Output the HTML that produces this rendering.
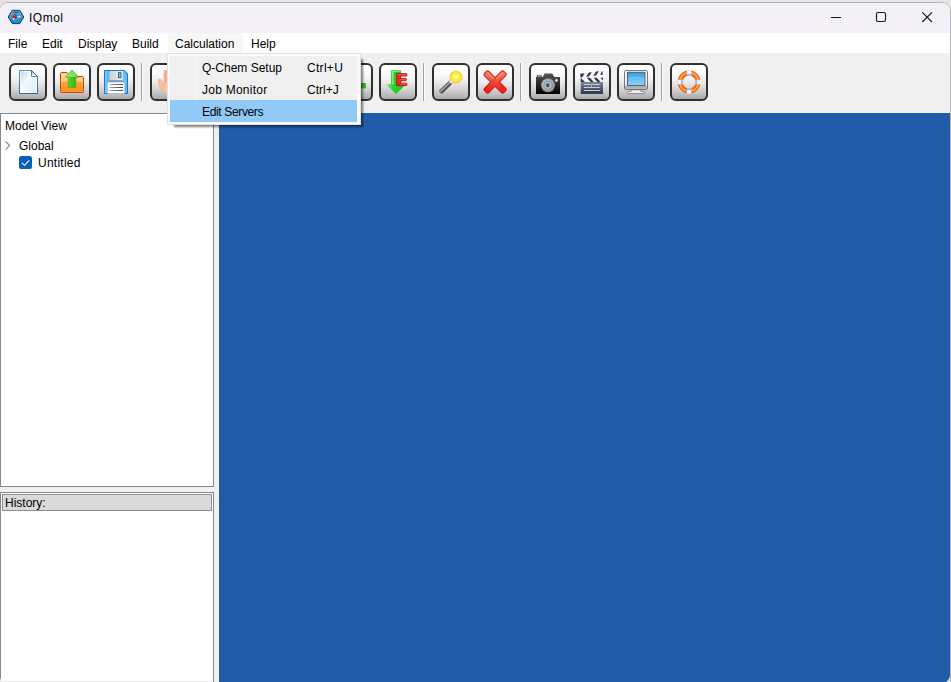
<!DOCTYPE html>
<html>
<head>
<meta charset="utf-8">
<title>IQmol</title>
<style>
html,body{margin:0;padding:0;}
body{width:951px;height:682px;overflow:hidden;background:#e5e5e5;font-family:"Liberation Sans",sans-serif;font-size:12px;color:#000;position:relative;}
#frame{position:absolute;left:-1px;top:2px;width:950px;height:690px;border:1px solid #b5b5b5;border-radius:9px;}
#win{position:absolute;left:0;top:0;width:950px;height:683px;clip-path:inset(3px 0 0 0 round 8px 8px 8px 6px);background:#f0f0f0;}
#win div,#win span{position:absolute;box-sizing:border-box;}
#title{left:0;top:3px;width:950px;height:30px;background:#f3f0f7;}
.t{line-height:14px;white-space:nowrap;}
#menubar{left:0;top:33px;width:950px;height:20px;background:#fff;}
#calcbg{left:168px;top:33px;width:75px;height:19px;background:#f7f7f7;border-radius:3px;}
.btn{top:63px;width:38px;height:38px;border:2px solid #303030;border-radius:6px;background:linear-gradient(#ffffff 0%,#fbfbfb 25%,#ececec 50%,#cfcfcf 75%,#a9a9a9 100%);overflow:hidden;}
.sep{top:63px;width:2px;height:38px;background:#fcfcfc;border-left:1px solid #a3a3a3;}
#viewer{left:219px;top:113px;width:731px;height:580px;background:#205ca8;}
#model{left:0;top:113px;width:214px;height:374px;background:#fff;border:1px solid #828790;}
#hist{left:0;top:492px;width:214px;height:200px;background:#fff;border:1px solid #828790;}
#histhead{left:2px;top:494px;width:210px;height:17px;background:#dadada;border:1px solid #8e8e8e;}
#dd{left:167px;top:53px;width:194px;height:72px;background:#fafafa;border:1px solid #e2e2e2;}
#ddsh{left:174px;top:59px;width:189px;height:68px;background:rgba(0,0,0,0.5);filter:blur(1.3px);}
#ddin{left:170px;top:56px;width:187px;height:66px;background:#f0f0f0;}
#ddsep{left:195px;top:56px;width:3px;height:66px;background:#f4f4f4;}
#hl{left:170px;top:100px;width:187px;height:22px;background:#91c9f7;}
</style>
</head>
<body>
<div id="frame"></div>
<div id="win">
  <div id="title"></div>
  <span class="t" style="left:29px;top:11px;letter-spacing:0.5px">IQmol</span>
  <div id="menubar"></div>
  <div id="calcbg"></div>
  <span class="t" style="left:8px;top:37px">File</span>
  <span class="t" style="left:42px;top:37px">Edit</span>
  <span class="t" style="left:78px;top:37px">Display</span>
  <span class="t" style="left:132px;top:37px">Build</span>
  <span class="t" style="left:175px;top:37px">Calculation</span>
  <span class="t" style="left:251px;top:37px">Help</span>

  <div class="btn" id="b1" style="left:9px"></div>
  <div class="btn" id="b2" style="left:53px"></div>
  <div class="btn" id="b3" style="left:97px"></div>
  <div class="sep" style="left:141px"></div>
  <div class="btn" id="b4" style="left:150px"></div>
  <div class="btn" id="b8" style="left:335px"></div>
  <div class="btn" id="b9" style="left:379px"></div>
  <div class="sep" style="left:423px"></div>
  <div class="btn" id="b10" style="left:432px"></div>
  <div class="btn" id="b11" style="left:476px"></div>
  <div class="sep" style="left:520px"></div>
  <div class="btn" id="b12" style="left:529px"></div>
  <div class="btn" id="b13" style="left:573px"></div>
  <div class="btn" id="b14" style="left:617px"></div>
  <div class="sep" style="left:661px"></div>
  <div class="btn" id="b15" style="left:670px"></div>

  <div id="viewer"></div>
  <div id="model"></div>
  <span class="t" style="left:5px;top:119px">Model View</span>
  <span class="t" style="left:19px;top:139px">Global</span>
  <span class="t" style="left:38px;top:156px;letter-spacing:0.25px">Untitled</span>
  <div id="hist"></div>
  <div id="histhead"></div>
  <div style="left:1px;top:681px;width:211px;height:1px;background:#ececec"></div>
  <span class="t" style="left:5px;top:496px">History:</span>

  <svg id="icons" style="position:absolute;left:0;top:0" width="950" height="683" viewBox="0 0 950 683">
    <defs>
      <linearGradient id="gDoc" x1="0" y1="0" x2="1" y2="1"><stop offset="0" stop-color="#b4d0e2"/><stop offset="0.4" stop-color="#f4f9fb"/><stop offset="1" stop-color="#dfeaf2"/></linearGradient>
      <linearGradient id="gDocS" x1="0" y1="0" x2="0" y2="1"><stop offset="0" stop-color="#4a86b2"/><stop offset="1" stop-color="#145a8e"/></linearGradient>
      <linearGradient id="gFoldT" x1="0" y1="0" x2="1" y2="1"><stop offset="0" stop-color="#7aa2be"/><stop offset="0.6" stop-color="#ffffff"/><stop offset="1" stop-color="#ffffff"/></linearGradient>
      <linearGradient id="gFold" x1="0" y1="0" x2="0" y2="1"><stop offset="0" stop-color="#ffd28c"/><stop offset="0.45" stop-color="#ffb860"/><stop offset="0.5" stop-color="#ffa238"/><stop offset="1" stop-color="#ff9424"/></linearGradient>
      <linearGradient id="gGreen" x1="0" y1="0" x2="1" y2="0"><stop offset="0" stop-color="#7ee05a"/><stop offset="0.4" stop-color="#4ccc20"/><stop offset="1" stop-color="#2fa010"/></linearGradient>
      <linearGradient id="gFlop" x1="0" y1="0" x2="1" y2="0"><stop offset="0" stop-color="#86d0fa"/><stop offset="0.12" stop-color="#5cbaf4"/><stop offset="0.8" stop-color="#6ec4f6"/><stop offset="1" stop-color="#5ab4f0"/></linearGradient>
      <linearGradient id="gLine" gradientUnits="userSpaceOnUse" x1="109" y1="0" x2="123" y2="0"><stop offset="0" stop-color="#a8a0b0"/><stop offset="1" stop-color="#2c2434"/></linearGradient>
      <linearGradient id="gShut" x1="0" y1="0" x2="1" y2="0"><stop offset="0" stop-color="#d0d0d0"/><stop offset="1" stop-color="#f0f0f0"/></linearGradient>
      <linearGradient id="gArr" x1="0" y1="0" x2="1" y2="0"><stop offset="0" stop-color="#8fe88f"/><stop offset="0.35" stop-color="#2fcf2f"/><stop offset="1" stop-color="#18b818"/></linearGradient>
      <linearGradient id="gX2" x1="0" y1="0" x2="1" y2="0"><stop offset="0" stop-color="#f47a5c"/><stop offset="0.5" stop-color="#ee4a34"/><stop offset="1" stop-color="#e61c1c"/></linearGradient>
      <linearGradient id="gX3" x1="1" y1="0" x2="0" y2="0"><stop offset="0" stop-color="#f47a5c"/><stop offset="0.5" stop-color="#ee4a34"/><stop offset="1" stop-color="#e61c1c"/></linearGradient>
      <linearGradient id="gX" x1="0" y1="0" x2="0" y2="1"><stop offset="0" stop-color="#f47a5c"/><stop offset="0.5" stop-color="#ee4a34"/><stop offset="1" stop-color="#e61c1c"/></linearGradient>
      <linearGradient id="gCam" x1="0" y1="0" x2="0" y2="1"><stop offset="0" stop-color="#555"/><stop offset="0.5" stop-color="#2a2a2a"/><stop offset="1" stop-color="#000"/></linearGradient>
      <radialGradient id="gLens"><stop offset="0" stop-color="#3a6c98"/><stop offset="0.35" stop-color="#3a6c98"/><stop offset="0.5" stop-color="#c8ccd0"/><stop offset="0.75" stop-color="#a2a2a2"/><stop offset="1" stop-color="#8a8a8a"/></radialGradient>
      <linearGradient id="gRing" x1="0" y1="0" x2="1" y2="1"><stop offset="0" stop-color="#c4c4c4"/><stop offset="0.5" stop-color="#a8a8a8"/><stop offset="1" stop-color="#8c8c8c"/></linearGradient>
      <linearGradient id="gClap" x1="0" y1="0" x2="0" y2="1"><stop offset="0" stop-color="#7e8a9c"/><stop offset="1" stop-color="#263446"/></linearGradient>
      <linearGradient id="gScr" x1="0" y1="0" x2="0" y2="1"><stop offset="0" stop-color="#379ee0"/><stop offset="0.45" stop-color="#5cb6ea"/><stop offset="0.5" stop-color="#6cc2f0"/><stop offset="1" stop-color="#86d2f6"/></linearGradient>
      <linearGradient id="gMon" x1="0" y1="0" x2="0" y2="1"><stop offset="0" stop-color="#fcfcfc"/><stop offset="0.78" stop-color="#ececec"/><stop offset="0.82" stop-color="#aaaeae"/><stop offset="1" stop-color="#b8baba"/></linearGradient>
      <radialGradient id="gStar"><stop offset="0" stop-color="#ffffff"/><stop offset="0.3" stop-color="#fffa80"/><stop offset="0.75" stop-color="#fff220"/><stop offset="1" stop-color="#ffd820"/></radialGradient>
      <linearGradient id="gWand" x1="0" y1="0" x2="0" y2="1"><stop offset="0" stop-color="#585858"/><stop offset="0.32" stop-color="#b8b8b8"/><stop offset="0.55" stop-color="#7a7a7a"/><stop offset="1" stop-color="#2c2c2c"/></linearGradient>
      <linearGradient id="gHex" x1="0" y1="0" x2="0" y2="1"><stop offset="0" stop-color="#5fb4e4"/><stop offset="0.5" stop-color="#2f9fdc"/><stop offset="1" stop-color="#1c8cd0"/></linearGradient>
      <radialGradient id="gRed" cx="0.4" cy="0.4"><stop offset="0" stop-color="#ff7060"/><stop offset="0.5" stop-color="#f01010"/><stop offset="1" stop-color="#d00000"/></radialGradient>
    </defs>

    <!-- title icon -->
    <g>
      <path d="M12.2 10.3 H19.8 L23.8 17 L19.8 23.6 H12.2 L8.2 17 Z" fill="url(#gHex)" stroke="#163a54" stroke-width="1" stroke-linejoin="round"/>
      <path d="M13.4 12.3 H18.7" stroke="#1c4c6c" stroke-width="1"/>
      <path d="M11.6 17.5 L12.8 22 M20.4 17.5 L19.2 22" stroke="#1a4866" stroke-width="0.7" stroke-dasharray="1 0.8" opacity="0.7"/>
      <path d="M14.8 16.3 L13.6 19 M14.8 16.3 L19.4 16.8" stroke="#e8e4d8" stroke-width="0.9"/>
      <circle cx="19.5" cy="16.8" r="0.9" fill="#f4f0e4"/>
      <circle cx="13.5" cy="19.1" r="0.8" fill="#f4f0e4"/>
      <circle cx="14.8" cy="16.3" r="2" fill="url(#gRed)"/>
    </g>
    <!-- window controls -->
    <path d="M831 17.5 H841" stroke="#1a1a1a" stroke-width="1.1"/>
    <rect x="876.5" y="12.5" width="9" height="9" rx="1.4" fill="none" stroke="#1a1a1a" stroke-width="1.15"/>
    <path d="M922.3 12.3 L932 22 M932 12.3 L922.3 22" stroke="#1a1a1a" stroke-width="1.15"/>

    <!-- b1 new doc -->
    <g>
      <path d="M19.5 70.5 H31.5 L37.5 76.5 V93.5 H19.5 Z" fill="url(#gDoc)" stroke="url(#gDocS)" stroke-width="0.9" stroke-linejoin="miter"/>
      <path d="M20.5 71.6 H30.6 V77.3 H36.5 V92.5 H20.5 Z" fill="none" stroke="#ffffff" stroke-width="1" opacity="0.8"/>
      <path d="M31.4 70.8 V76.6 H37.2 Z" fill="url(#gFoldT)"/>
      <path d="M31.5 70.5 V76.5 H37.5" fill="none" stroke="#2f6e9e" stroke-width="0.8"/>
      <path d="M31.5 70.5 L37.5 76.5" stroke="#1f5f90" stroke-width="1"/>
    </g>
    <!-- b2 open -->
    <g>
      <path d="M61.5 72.5 H67 L68.5 74.5 V76.5 H82.5 Q83.5 76.5 83.5 77.5 V91.5 Q83.5 92.5 82.5 92.5 H61.5 Q60.5 92.5 60.5 91.5 V73.5 Q60.5 72.5 61.5 72.5 Z" fill="url(#gFold)" stroke="#c44a04" stroke-width="1"/>
      <path d="M61.5 82 Q72 79.5 82.5 82 V77.5 H68 V73.5 H61.5 Z" fill="#ffe0a8" opacity="0.45"/>
      <path d="M72 70 L78.8 77.2 H75.8 V87.7 H68.2 V77.2 H65.2 Z" fill="url(#gGreen)" stroke="#3aa81c" stroke-width="0.6"/>
      <path d="M72 70.6 L77.6 76.8 H66.4 Z" fill="#a6ec84" opacity="0.7"/>
    </g>
    <!-- b3 save -->
    <g>
      <path d="M104.5 70.5 H124.5 L127.5 73.5 V93.5 H104.5 Z" fill="url(#gFlop)" stroke="#1878d0" stroke-width="1"/>
      <rect x="109.5" y="71" width="13.2" height="9.5" fill="url(#gShut)"/>
      <path d="M109.5 80.7 H122.7" stroke="#6a8db4" stroke-width="0.8"/>
      <rect x="118.4" y="72.7" width="2.6" height="5" fill="#5fc8ff" stroke="#3a4660" stroke-width="0.8"/>
      <rect x="107.5" y="81.8" width="17" height="11.7" fill="#ffffff" stroke="#c8b8b0" stroke-width="0.5"/>
      <path d="M109.5 84.5 H123 M109.5 87.5 H123 M109.5 90.5 H123" stroke="url(#gLine)" stroke-width="0.9"/>
      <path d="M107.5 81.8 H124.5" stroke="#5c7ea8" stroke-width="0.8"/>
    </g>
    <!-- b4 hand (mostly hidden) -->
    <g>
      <path d="M164 72 Q164 70.2 165.6 70.2 Q167.3 70.2 167.3 72 V82 L171 82 V93 Q166 94.5 162 91 Q159.5 87 158.2 80.8 Q158 79 159.6 78.9 Q161 78.9 161.6 80.6 L163 84.5 Q164 85.5 164 84 Z" fill="#f6c498" stroke="#f0a080" stroke-width="0.6"/>
      <path d="M165.6 70.6 V83" stroke="#f4a890" stroke-width="2.2"/>
    </g>
    <!-- b8 partially hidden -->
    <rect x="356" y="83" width="10" height="5.5" fill="#3cb81c"/>
    <!-- b9 arrow down + E -->
    <g>
      <path d="M391 70.2 H401 V84.2 H406 L396 94 L386 84.2 H391 Z" fill="url(#gArr)"/>
      <path d="M392 71 H400.5 V72 H393.5 V84.5 H392 Z" fill="#b4f0b4" opacity="0.7"/>
      <path d="M396.6 73.5 H406.8 V76 H400.8 V78.5 H406.2 V80.6 H400.8 V83.2 H406.8 V85.5 H396.6 Z" fill="#ee2424" stroke="#b01818" stroke-width="0.8" stroke-linejoin="miter"/>
      <path d="M397.6 74.6 H406 M400.6 79.4 H405.6 M400.6 84.2 H406" stroke="#ff8a80" stroke-width="0.7" opacity="0.8"/>
    </g>
    <!-- b10 wand -->
    <g>
      <g transform="translate(441.3 91.4) rotate(-44)">
        <rect x="-1.6" y="-1.9" width="17" height="3.8" rx="1.8" fill="url(#gWand)" stroke="#444" stroke-width="0.6"/>
        <rect x="12.6" y="-1.9" width="5.2" height="3.8" fill="#f6f6fa" stroke="#a8a8b0" stroke-width="0.4"/>
      </g>
      <polygon points="463.2,77.0 461.1,78.0 462.7,79.8 460.3,79.9 461.1,82.1 458.9,81.3 458.8,83.7 457.0,82.1 456.0,84.2 455.0,82.1 453.2,83.7 453.1,81.3 450.9,82.1 451.7,79.9 449.3,79.8 450.9,78.0 448.8,77.0 450.9,76.0 449.3,74.2 451.7,74.1 450.9,71.9 453.1,72.7 453.2,70.3 455.0,71.9 456.0,69.8 457.0,71.9 458.8,70.3 458.9,72.7 461.1,71.9 460.3,74.1 462.7,74.2 461.1,76.0" fill="#ffb430"/>
      <circle cx="456" cy="77" r="5.3" fill="url(#gStar)"/>
    </g>
    <!-- b11 X -->
    <g transform="translate(495.1 82)">
      <g transform="rotate(45)"><rect x="-14.2" y="-3.6" width="28.4" height="7.2" rx="2.2" fill="#e00c14"/></g>
      <g transform="rotate(-45)"><rect x="-14.2" y="-3.6" width="28.4" height="7.2" rx="2.2" fill="#e00c14"/></g>
      <g transform="rotate(45)"><rect x="-13.3" y="-2.7" width="26.6" height="5.4" rx="1.5" fill="url(#gX2)"/></g>
      <g transform="rotate(-45)"><rect x="-13.3" y="-2.7" width="26.6" height="5.4" rx="1.5" fill="url(#gX3)"/></g>
      <g transform="rotate(45)"><rect x="-12" y="-2" width="9" height="1.5" rx="0.7" fill="#fbb0a0" opacity="0.55"/></g>
      <g transform="rotate(-45)"><rect x="3" y="-2" width="9" height="1.5" rx="0.7" fill="#fbb0a0" opacity="0.55"/></g>
    </g>
    <!-- b12 camera -->
    <g>
      <path d="M536 77 H542.8 L544.6 73.6 H552.2 L554.4 77 H560 V94 H536 Z" fill="url(#gCam)"/>
      <rect x="536.8" y="75.1" width="5" height="2" fill="#5a5a5a"/>
      <rect x="537.6" y="75.5" width="3.4" height="1.2" fill="#9a9a9a"/>
      <circle cx="548" cy="85.2" r="7" fill="#8c8c8c"/>
      <circle cx="548" cy="85.2" r="6.2" fill="url(#gRing)"/>
      <circle cx="548" cy="85.2" r="4.4" fill="#8c9094"/>
      <circle cx="548" cy="85.2" r="3.5" fill="#b4c0cc"/>
      <circle cx="548" cy="85.2" r="2.5" fill="#7e98b0"/>
      <circle cx="547.9" cy="85.3" r="1.7" fill="#2a567e"/>
      <path d="M549.4 86.6 Q550.6 85.4 550.2 83.6" stroke="#e4ecf4" stroke-width="0.7" fill="none" opacity="0.8"/>
      <circle cx="556.4" cy="80.5" r="1.4" fill="#ffffff" stroke="#666" stroke-width="0.5"/>
    </g>
    <!-- b13 clapper -->
    <g>
      <rect x="580.7" y="82" width="22.3" height="11.9" fill="url(#gClap)"/>
      <path d="M584 84.5 H590.8 M592.2 84.5 H599.8 M584 87.5 H599.8 M584 90.5 H599.8" stroke="#c6ced8" stroke-width="1"/>
      <path d="M591.5 84 V87.4" stroke="#c6ced8" stroke-width="0.7"/>
      <g>
        <rect x="580.7" y="77.7" width="22.3" height="4.3" fill="#f2f2f2"/>
        <path d="M580.7 78 L585 82 H580.7 Z M586.8 77.7 H589.9 L593.8 82 H590.7 Z M593.6 77.7 H596.7 L600.6 82 H597.5 Z M600.4 77.7 H603 V80.6 Z" fill="#2c3848"/>
      </g>
      <g transform="rotate(-7.8 580.7 77.7)">
        <rect x="580.7" y="73.7" width="22.4" height="3.9" fill="#f2f2f2"/>
        <path d="M580.7 73.7 H585 L582.4 77.6 H580.7 Z M589.6 73.7 H592.4 L589 77.6 H586.2 Z M596.8 73.7 H599.6 L596.2 77.6 H593.4 Z M602.4 74.6 L603.1 73.7 V77.6 H600.4 Z" fill="#2c3848"/>
      </g>
    </g>
    <!-- b14 monitor -->
    <g>
      <path d="M631.4 89.4 V91 Q631.4 91.6 630.6 91.6 H628.3 Q627.3 91.6 627.3 92.6 Q627.3 93.6 628.3 93.6 H643.7 Q644.7 93.6 644.7 92.6 Q644.7 91.6 643.7 91.6 H641.4 Q640.6 91.6 640.6 91 V89.4 Z" fill="#f6f6f6" stroke="#645c6c" stroke-width="0.7"/>
      <rect x="632" y="89.8" width="8" height="1.6" fill="#dcdcdc"/>
      <rect x="624.5" y="70.5" width="23" height="19" rx="1.2" fill="url(#gMon)" stroke="#6c6474" stroke-width="0.9"/>
      <rect x="627.4" y="72.2" width="17.6" height="13.4" fill="url(#gScr)" stroke="#4c4450" stroke-width="0.8"/>
      <path d="M628 78.2 Q636 76.6 644.4 78.2" stroke="#a8d8f4" stroke-width="0.5" fill="none" opacity="0.8"/>
    </g>
    <!-- b15 lifebuoy -->
    <g>
      <circle cx="689.1" cy="82" r="9" fill="none" stroke="#ee7010" stroke-width="4.9"/>
      <circle cx="689.1" cy="82" r="9.5" fill="none" stroke="#ffc090" stroke-width="1.3" opacity="0.75"/>
      <circle cx="689.1" cy="82" r="11.3" fill="none" stroke="#e0600a" stroke-width="0.5" opacity="0.8"/>
      <circle cx="689.1" cy="82" r="6.7" fill="none" stroke="#d85c08" stroke-width="0.5" opacity="0.8"/>
      <g fill="#f2f6ff">
        <rect x="686.9" y="70.3" width="4.4" height="5.5"/>
        <rect x="686.9" y="88.2" width="4.4" height="5.5"/>
        <rect x="677.4" y="79.8" width="5.5" height="4.4"/>
        <rect x="695.3" y="79.8" width="5.5" height="4.4"/>
      </g>
      <g fill="#8cb8f4" opacity="0.9">
        <rect x="686.9" y="73.8" width="4.4" height="2"/>
        <rect x="686.9" y="88.2" width="4.4" height="2"/>
        <rect x="680.9" y="79.8" width="2" height="4.4"/>
        <rect x="695.3" y="79.8" width="2" height="4.4"/>
      </g>
    </g>
    <!-- tree chevron + checkbox -->
    <path d="M5.6 141.4 L9.6 145.5 L5.6 149.6" fill="none" stroke="#8a8a8a" stroke-width="1.2"/>
    <rect x="19" y="156" width="13" height="13" rx="2.6" fill="#0a5fb8"/>
    <path d="M22 162.8 L24.6 165.3 L29.2 160.3" fill="none" stroke="#ffffff" stroke-width="1.1"/>
  </svg>
  <div id="ddsh"></div>
  <div id="dd"></div>
  <div id="ddin"></div>
  <div id="ddsep"></div>
  <div id="hl"></div>
  <span class="t" style="left:202px;top:61px">Q-Chem Setup</span>
  <span class="t" style="left:307px;top:61px;letter-spacing:0.3px">Ctrl+U</span>
  <span class="t" style="left:202px;top:83px;letter-spacing:0.25px">Job Monitor</span>
  <span class="t" style="left:307px;top:83px">Ctrl+J</span>
  <span class="t" style="left:202px;top:105px;letter-spacing:-0.35px">Edit Servers</span>
</div>
</body>
</html>
